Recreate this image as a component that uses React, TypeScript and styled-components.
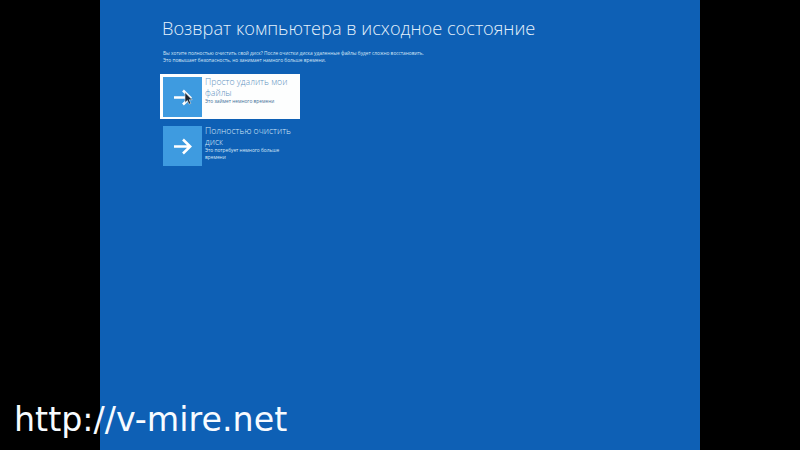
import React from "react";
import styled, { createGlobalStyle } from "styled-components";

const GlobalStyle = createGlobalStyle`
  html, body {
    margin: 0;
    padding: 0;
    height: 100%;
    background: #000;
    overflow: hidden;
  }
  #root {
    height: 100%;
  }
`;

const options = [
  {
    id: 1,
    title: "Просто удалить мои файлы",
    hint: "Это займет немного времени",
    active: true,
  },
  {
    id: 2,
    title: "Полностью очистить диск",
    hint: "Это потребует немного больше времени",
    active: false,
  },
];

const Arrow = () => (
  <svg width="19" height="17" viewBox="0 0 19 17" fill="none">
    <path d="M1 8.5H17M10 1.5L17.2 8.5L10 15.5" stroke="#fff" strokeWidth="2.6" />
  </svg>
);

const Cursor = () => (
  <svg width="9" height="13" viewBox="0 0 9 13">
    <path d="M1 0.5V10.5L3.4 8.4L5 12.2L6.8 11.4L5.2 7.8H8.2Z" fill="#1c2530" stroke="#dfe6ec" strokeWidth="0.6" />
  </svg>
);

const App = () => {
  return (
    <>
      <GlobalStyle />
      <Page>
        <Panel>
          <Title>Возврат компьютера в исходное состояние</Title>
          <Description>
            Вы хотите полностью очистить свой диск? После очистки диска удаленные файлы будет сложно восстановить.
            <br />
            Это повышает безопасность, но занимает намного больше времени.
          </Description>
          <List>
            {options.map((option) => (
              <Tile key={option.id} $active={option.active}>
                <IconBox>
                  <Arrow />
                  {option.active && (
                    <Pointer>
                      <Cursor />
                    </Pointer>
                  )}
                </IconBox>
                <TileText>
                  <TileTitle $active={option.active}>{option.title}</TileTitle>
                  <TileHint $active={option.active}>{option.hint}</TileHint>
                </TileText>
              </Tile>
            ))}
          </List>
        </Panel>
        <Watermark>http://v-mire.net</Watermark>
      </Page>
    </>
  );
};

export default App;

const Page = styled.div`
  position: relative;
  display: flex;
  justify-content: center;
  width: 800px;
  height: 450px;
  background: #000;
  overflow: hidden;
`;
const Panel = styled.main`
  width: 600px;
  height: 450px;
  box-sizing: border-box;
  padding: 15px 0 0 60px;
  background: #0e60b5;
  font-family: "Open Sans", "Noto Sans", sans-serif;
`;
const Title = styled.h1`
  margin: 0 0 0 2px;
  font-size: 18.2px;
  line-height: 26px;
  font-weight: 300;
  color: #e3f0fb;
  white-space: nowrap;
`;
const Description = styled.p`
  margin: 9px 0 0 3px;
  font-size: 4.8px;
  line-height: 7px;
  color: #d5e6f6;
  white-space: nowrap;
`;
const List = styled.div`
  display: flex;
  flex-direction: column;
  gap: 4px;
  margin-top: 10px;
`;
const Tile = styled.div<{ $active: boolean }>`
  display: flex;
  gap: 3px;
  width: 140px;
  height: 45px;
  box-sizing: border-box;
  padding: 3px;
  background: ${(p) => (p.$active ? "#fdfefe" : "transparent")};
`;
const IconBox = styled.div`
  position: relative;
  display: flex;
  flex: none;
  align-items: center;
  justify-content: center;
  width: 39px;
  height: 40px;
  background: #3e9be0;
`;
const Pointer = styled.span`
  position: absolute;
  left: 21px;
  top: 15px;
  display: flex;
`;
const TileText = styled.div`
  min-width: 0;
  flex: 1;
`;
const TileTitle = styled.div<{ $active: boolean }>`
  font-size: 8.7px;
  line-height: 11px;
  font-weight: 300;
  color: ${(p) => (p.$active ? "#5f93bf" : "#d3e6f7")};
`;
const TileHint = styled.div<{ $active: boolean }>`
  margin-top: -1px;
  font-size: 4.8px;
  line-height: 7px;
  color: ${(p) => (p.$active ? "#3f7099" : "#d8e9f8")};
`;
const Watermark = styled.div`
  position: absolute;
  left: 14px;
  top: 401px;
  font-family: "DejaVu Sans", sans-serif;
  font-size: 33.3px;
  line-height: 38px;
  color: #f7fbff;
  white-space: nowrap;
`;
